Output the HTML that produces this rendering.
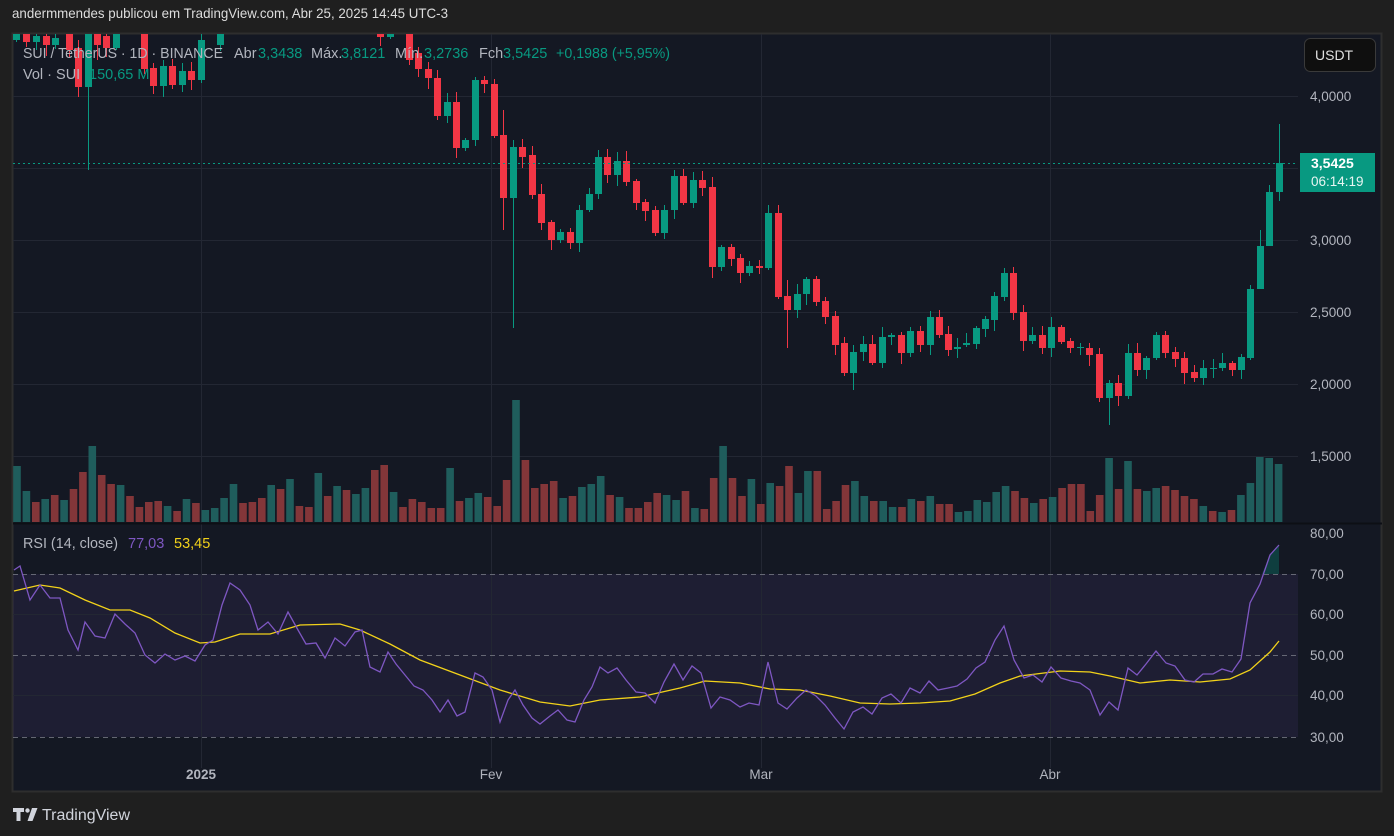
<!DOCTYPE html>
<html><head><meta charset="utf-8">
<style>
html,body{margin:0;padding:0;background:#1f1f1f;width:1394px;height:836px;overflow:hidden}
svg{display:block}
text{font-family:"Liberation Sans",sans-serif}
</style></head>
<body>
<svg id="s" width="1394" height="836" viewBox="0 0 1394 836" xmlns="http://www.w3.org/2000/svg">
<rect x="0" y="0" width="1394" height="836" fill="#1f1f1f"/>
<text x="12" y="18" font-size="14" fill="#dcdcdc" textLength="436" lengthAdjust="spacingAndGlyphs">andermmendes publicou em TradingView.com, Abr 25, 2025 14:45 UTC-3</text>
<rect x="12.5" y="33.5" width="1369" height="758" fill="#141823" stroke="#2e2e2e" stroke-width="2"/>
<defs>
<clipPath id="cp"><rect x="13" y="34" width="1285" height="488"/></clipPath>
<clipPath id="cr"><rect x="13" y="524" width="1285" height="246"/></clipPath>
</defs>
<rect x="13" y="574" width="1285" height="163" fill="#7e57c2" fill-opacity="0.1"/>
<g id="grid" stroke="#232733" stroke-width="1">
<line x1="13" x2="1298" y1="96.5" y2="96.5"/><line x1="13" x2="1298" y1="168.5" y2="168.5"/>
<line x1="13" x2="1298" y1="240.5" y2="240.5"/><line x1="13" x2="1298" y1="312.5" y2="312.5"/>
<line x1="13" x2="1298" y1="384.5" y2="384.5"/><line x1="13" x2="1298" y1="456.5" y2="456.5"/>
<line x1="13" x2="1298" y1="614.5" y2="614.5"/><line x1="13" x2="1298" y1="695.5" y2="695.5"/>
<line x1="201.5" x2="201.5" y1="34" y2="768"/><line x1="491.5" x2="491.5" y1="34" y2="768"/>
<line x1="761.5" x2="761.5" y1="34" y2="768"/><line x1="1050.5" x2="1050.5" y1="34" y2="768"/>
</g>
<line x1="13" x2="1382" y1="523.5" y2="523.5" stroke="#0d0f15" stroke-width="2"/>
<g stroke="#787b86" stroke-dasharray="5,4" stroke-width="1" opacity="0.8">
<line x1="13" x2="1298" y1="574.5" y2="574.5"/><line x1="13" x2="1298" y1="655.5" y2="655.5"/><line x1="13" x2="1298" y1="737.5" y2="737.5"/>
</g>
<g id="vol" clip-path="url(#cp)"></g>
<g id="cdl" clip-path="url(#cp)"></g>
<line x1="13" x2="1298" y1="163.5" y2="163.5" stroke="#089981" stroke-dasharray="2,3" stroke-width="1"/>
<g clip-path="url(#cr)" id="rsi"></g>
<!-- legend -->
<g font-size="14.5" fill="#b2b5be">
<text x="23" y="58" textLength="200" lengthAdjust="spacingAndGlyphs">SUI / TetherUS · 1D · BINANCE</text>
<text x="234" y="58">Abr</text><text x="258" y="58" fill="#089981">3,3438</text>
<text x="311" y="58">Máx.</text><text x="341" y="58" fill="#089981">3,8121</text>
<text x="395" y="58">Mín.</text><text x="424" y="58" fill="#089981">3,2736</text>
<text x="479" y="58">Fch</text><text x="503" y="58" fill="#089981">3,5425</text>
<text x="556" y="58" fill="#089981" textLength="114" lengthAdjust="spacingAndGlyphs">+0,1988 (+5,95%)</text>
<text x="23" y="79">Vol · SUI</text><text x="89" y="79" fill="#089981">150,65 M</text>
<text x="23" y="548" textLength="95" lengthAdjust="spacingAndGlyphs">RSI (14, close)</text>
<text x="128" y="548" fill="#7e57c2">77,03</text><text x="174" y="548" fill="#f2d21a">53,45</text>
</g>
<!-- price axis -->
<g font-size="13.5" fill="#b2b5be">
<text x="1310" y="101">4,0000</text><text x="1310" y="245">3,0000</text><text x="1310" y="317">2,5000</text>
<text x="1310" y="389">2,0000</text><text x="1310" y="461">1,5000</text>
<text x="1310" y="538">80,00</text><text x="1310" y="579">70,00</text><text x="1310" y="619">60,00</text>
<text x="1310" y="660">50,00</text><text x="1310" y="700">40,00</text><text x="1310" y="742">30,00</text>
</g>
<rect x="1300" y="153" width="75" height="39" fill="#089981"/>
<text x="1311" y="168" font-size="14" font-weight="bold" fill="#ffffff">3,5425</text>
<text x="1311" y="186" font-size="13.5" fill="#e8f5f2">06:14:19</text>
<rect x="1304.5" y="38.5" width="71" height="33" rx="6" fill="#0f0f0f" stroke="#3a3a3a"/>
<text x="1315" y="60" font-size="14" fill="#e0e0e0">USDT</text>
<g font-size="13.5" fill="#b2b5be" text-anchor="middle">
<text x="201" y="779" font-weight="bold">2025</text><text x="491" y="779">Fev</text><text x="761" y="779">Mar</text><text x="1050" y="779">Abr</text>
</g>
<g fill="#d1d4dc">
<path d="M13 808h11v4h-3.5v9h-4v-9H13z"/><circle cx="27.5" cy="810.5" r="2.2"/><path d="M32 808h5.5l-5 13h-5z"/>
</g>
<text x="42" y="820" font-size="15.5" fill="#d1d4dc" textLength="88" lengthAdjust="spacingAndGlyphs">TradingView</text>
</svg>
<script>
var NS="http://www.w3.org/2000/svg";
function el(p,t,a){var e=document.createElementNS(NS,t);for(var k in a)e.setAttribute(k,a[k]);p.appendChild(e);return e;}
var V="466g491g502r499g495r500g489r472r446g475r484r485g496r507r502r501r506g511r499g503r510g508g498g484g503r502r498r485g489r479g506r507r473g496r486g490r494g488g470r465r492g507r499r502r508r508r468g501r498g493g497r506r480r400g460r488r484r481r498g496r487g484g476g495r497g508r508r502r493r495g500g491r508g509r478r446g478r496r479g504r483g486r466r493g471g471r509r501r485r481g496g501r501g507g507r499g501r496g504r504r512g511g500g502g492g486g491r498r503g499r497g488r484r484r511r495r458g489r461g489r491g488g486r490r496r499r506g511r512g510r495g483g457g458g464g";
var vg=document.getElementById("vol");var re=/(\d+)([gr])/g,m,i=0;
while((m=re.exec(V))){var y=+m[1];var x=13.2+i*9.415;el(vg,"rect",{x:x.toFixed(1),y:y,width:7.6,height:522-y,fill:m[2]=="g"?"#1f5d5c":"#833639"});i++;}
var C=[[16,40,33],[26,33,42],[36,42,36],[46,36,45],[55,45,38],[69,33,50],[78,48,87],[88,87,33],[97,33,45],[106,36,48],[116,48,33],[144,33,69],[153,68,86],[163,86,66],[172,66,85],[182,85,71],[191,71,80],[201,80,40],[220,45,33],[380,33,37],[390,37,33],[409,33,60],[418,53,69],[428,69,78],[437,78,116],[447,116,102],[456,102,148],[465,148,140],[475,140,80],[484,80,84],[494,84,136],[503,135,198],[513,198,147],[522,147,157],[532,155,195],[541,194,223],[551,222,240],[560,240,232],[570,232,243],[579,243,210],[589,210,194],[598,194,157],[607,157,175],[617,175,161],[626,161,182],[636,181,203],[645,202,211],[655,210,233],[664,233,210],[674,210,176],[683,176,203],[693,203,180],[702,180,188],[712,187,267],[721,267,247],[731,247,259],[740,258,273],[749,273,266],[759,266,268],[768,268,213],[778,213,297],[787,296,310],[797,310,294],[806,294,279],[816,279,302],[825,301,317],[835,316,345],[844,343,373],[853,373,352],[863,352,344],[872,344,363],[882,363,337],[891,337,335],[901,335,353],[910,353,331],[920,331,345],[930,345,317],[939,317,335],[948,334,350],[957,349,347],[966,345,343],[976,344,328],[985,329,319],[994,320,296],[1004,297,273],[1013,273,313],[1023,312,341],[1032,341,335],[1042,335,348],[1051,348,327],[1061,327,342],[1070,341,348],[1080,347,347],[1089,348,355],[1099,354,398],[1109,398,383],[1118,383,396],[1128,396,353],[1137,353,370],[1146,370,358],[1156,358,335],[1165,335,353],[1175,352,359],[1184,358,373],[1194,372,378],[1203,378,368],[1213,368,368],[1222,368,363],[1232,363,370],[1241,370,357],[1250,358,289],[1260,289,246],[1269,246,192],[1279,192,163]];
var W={88:[20,170],97:[20,60],513:[140,328],1279:[124,201],853:[345,390],1109:[380,425],503:[110,230],787:[280,348],1250:[285,360],1260:[230,258],1269:[185,205],768:[205,270],706:[160,190]};
var cg=document.getElementById("cdl");
C.forEach(function(c,k){var x=c[0],o=c[1],cl=c[2];var up=cl<=o;var col=up?"#089981":"#f23645";var t=Math.min(o,cl),b=Math.max(o,cl);
var r1=2+((k*37)%9),r2=2+((k*53)%10);var hi=t-r1,lo=b+r2;if(W[x]){hi=W[x][0];lo=W[x][1];}
el(cg,"line",{x1:x+.5,x2:x+.5,y1:hi,y2:lo,stroke:col,"stroke-width":1});
el(cg,"rect",{x:x-3,y:t,width:7,height:Math.max(1,b-t),fill:col});});
var R=[[14,570],[20,566],[30,600],[40,585],[50,598],[60,598],[68,630],[78,650],[85,622],[95,636],[105,638],[115,614],[125,624],[135,633],[145,655],[155,663],[165,654],[175,660],[185,656],[195,661],[205,645],[213,640],[222,605],[230,583],[240,590],[250,605],[258,630],[268,622],[278,634],[288,612],[298,630],[306,644],[316,643],[325,658],[335,638],[345,646],[355,632],[362,630],[370,667],[380,672],[388,652],[396,664],[405,675],[414,686],[423,690],[432,700],[440,712],[448,700],[457,716],[465,712],[475,673],[483,677],[492,690],[500,722],[508,700],[515,690],[523,705],[532,718],[540,724],[550,716],[558,710],[567,720],[575,722],[584,700],[592,687],[600,667],[608,673],[617,668],[626,680],[636,692],[645,693],[655,703],[664,682],[674,664],[683,680],[692,666],[701,673],[711,708],[720,697],[730,700],[740,707],[749,703],[759,705],[768,662],[778,703],[787,709],[797,698],[806,690],[816,696],[825,705],[835,718],[844,729],[853,712],[863,707],[872,714],[882,698],[891,694],[901,703],[910,688],[920,693],[929,681],[938,690],[948,688],[957,686],[967,679],[976,668],[985,662],[995,640],[1004,626],[1014,660],[1024,678],[1033,675],[1042,682],[1051,667],[1061,678],[1071,681],[1080,683],[1090,690],[1100,715],[1109,702],[1118,710],[1128,668],[1137,675],[1146,664],[1156,651],[1166,663],[1175,666],[1185,680],[1194,682],[1203,674],[1213,674],[1222,669],[1232,672],[1241,659],[1250,603],[1260,584],[1270,555],[1279,545]];
var M=[[14,591],[40,585],[60,588],[85,600],[110,610],[130,610],[150,618],[175,633],[200,643],[215,642],[240,634],[270,634],[300,625],[340,624],[360,630],[390,644],[420,660],[460,675],[500,690],[540,702],[570,706],[600,700],[640,697],[680,688],[705,681],[740,683],[770,689],[800,690],[830,696],[860,703],[890,704],[920,703],[950,701],[975,694],[1000,683],[1020,676],[1060,671],[1090,672],[1110,676],[1140,683],[1170,680],[1200,682],[1230,679],[1250,670],[1270,652],[1279,641]];
var rg=document.getElementById("rsi");
el(rg,"polygon",{points:"1262,574 1270,555 1279,545 1279,574",fill:"#089981","fill-opacity":"0.3"});
el(rg,"polyline",{points:M.map(function(p){return p.join(",")}).join(" "),fill:"none",stroke:"#f2d21a","stroke-width":1.3});
el(rg,"polyline",{points:R.map(function(p){return p.join(",")}).join(" "),fill:"none",stroke:"#7e57c2","stroke-width":1.3});
</script>
</body></html>
